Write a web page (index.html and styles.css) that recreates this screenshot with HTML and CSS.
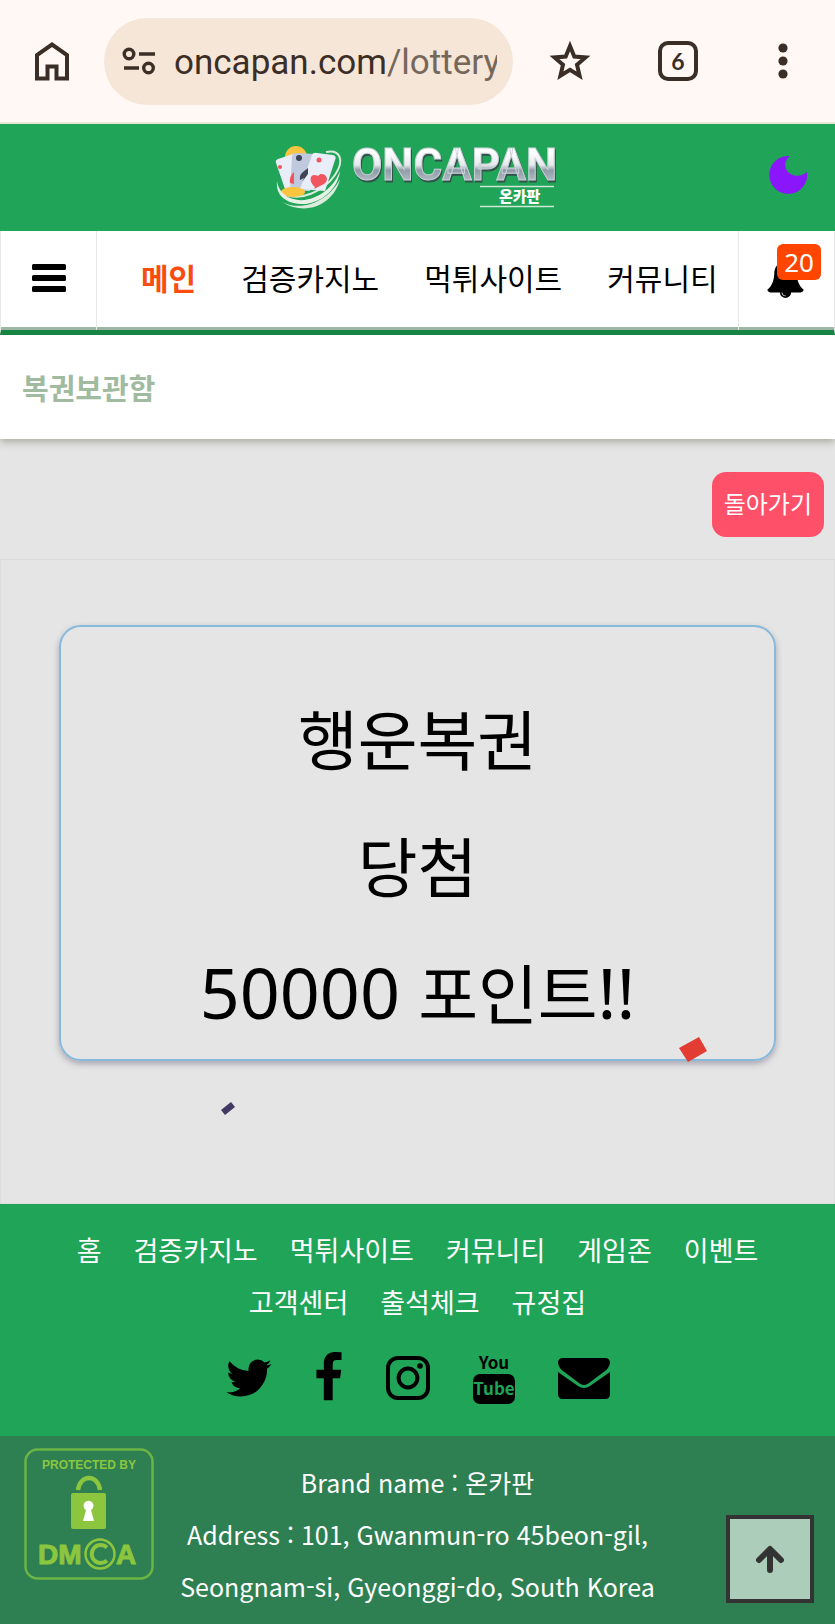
FILE: index.html
```
<!DOCTYPE html>
<html lang="ko">
<head>
    <meta charset="UTF-8">
    <meta name="viewport" content="width=device-width, initial-scale=1.0">
    <title>복권보관함 - 온카판</title>
    <link rel="stylesheet" href="styles.css">
</head>
<body>
    <div class="browser-bar">
        <button class="bar-btn" aria-label="Home">
            <svg width="36" height="40" viewBox="0 0 36 40" fill="none" stroke="currentColor" stroke-width="4">
                <path d="M3 37.500V14L18 3.500 33 14V37.500H22.500V25.500H13.500V37.500Z"/>
            </svg>
        </button>
        <div class="address">
            <svg width="34" height="28" viewBox="0 0 34 28" fill="none" stroke="currentColor" stroke-width="3.400">
                <circle cx="7" cy="7" r="4.800"/>
                <path d="M17 7H33M2 21H17"/>
                <circle cx="26.500" cy="21" r="4.800"/>
            </svg>
            <div class="url">oncapan.com<span>/lottery</span></div>
        </div>
        <button class="bar-btn" aria-label="Bookmark">
            <svg width="44" height="42" viewBox="0 0 44 42" fill="none" stroke="currentColor" stroke-width="4">
                <path d="M22 6L26.300 16.500 37.500 17.400 29 24.700 31.600 35.800 22 29.900 12.400 35.800 15 24.700 6.500 17.400 17.700 16.500Z"/>
            </svg>
        </button>
        <button class="bar-btn tabs" aria-label="Tabs">6</button>
        <button class="bar-btn" aria-label="Menu">
            <svg width="10" height="38" viewBox="0 0 10 38" fill="currentColor">
                <circle cx="5" cy="6" r="4.600"/>
                <circle cx="5" cy="19" r="4.600"/>
                <circle cx="5" cy="32" r="4.600"/>
            </svg>
        </button>
    </div>

    <header class="header">
        <a class="logo" href="#" aria-label="ONCAPAN 온카판">
            <svg width="288" height="72" viewBox="0 0 288 72">
                <defs>
                    <linearGradient id="metal" x1="0" y1="0" x2="0" y2="1">
                        <stop offset="0.250" stop-color="#ffffff"/>
                        <stop offset="0.500" stop-color="#e6e9ec"/>
                        <stop offset="0.600" stop-color="#8f9ba6"/>
                        <stop offset="0.850" stop-color="#b9c3cc"/>
                    </linearGradient>
                </defs>
                <!-- cards -->
                <g transform="translate(0 3)">
                    <circle cx="22" cy="16" r="11" fill="#f9c440"/>
                    <path d="M52 11C66 8 71 19 61 34 50 50 25 62 9 52" fill="none" stroke="#dcebdc" stroke-width="2"/>
                    <path d="M2 22Q1 19 4 18L19 13 28 47 12 51Z" fill="#e9edf7"/>
                    <path d="M18 16Q18 12 22 12L42 13 36 50 16 50Z" fill="#c0c9dd"/>
                    <path d="M38 14Q39 11 43 12L59 14Q63 15 61 19L51 50 26 48Z" fill="#e9edf7"/>
                    <path d="M41 46C33 39 37 31 44 35 48 29 58 37 50 43L40 48Z" fill="#f1555f"/>
                    <circle cx="6" cy="26" r="2" fill="#f1555f"/>
                    <circle cx="45" cy="19" r="2.500" fill="#f1555f"/>
                    <path d="M16 42Q15 35 20 31V43Z" fill="#f1555f"/>
                    <circle cx="25" cy="17" r="3" fill="#3e4358"/>
                    <path d="M34 27C29 31 25 33 26 39L30 37 28 41 34 33Z" fill="#3e4358"/>
                    <ellipse cx="19" cy="51" rx="12" ry="5" fill="#f9c440"/>
                    <path d="M3 40C5 56 24 64 41 56 53 51 62 41 66 30 64 47 50 60 32 63 16 64 1 57 3 40Z" fill="#e8f1e6"/>
                    <path d="M8 61C30 72 56 58 66 38 61 61 34 77 8 61Z" fill="#dcebdc"/>
                </g>
                <!-- wordmark -->
                <text class="wordmark" x="78" y="42">ONCAPAN</text>
                <path d="M206 48.500H280M206 68.500H280" stroke="#cfe8d6" stroke-width="1.500"/>
                <text class="wordmark-sub" x="225" y="64">온카판</text>
            </svg>
        </a>
        <button class="theme-btn" aria-label="Dark mode">
            <svg width="40" height="40" viewBox="0 0 40 40" fill="#8a17fb">
                <path d="M22 1A19 19 0 1 0 39 17C31 23 24 21 20 17 16 12 16 6 22 1Z"/>
            </svg>
        </button>
    </header>

    <nav class="nav">
        <button class="nav-side nav-menu" aria-label="메뉴">
            <svg width="34" height="28" viewBox="0 0 34 28" fill="#000">
                <rect width="34" height="6" rx="1.500"/>
                <rect y="11" width="34" height="6" rx="1.500"/>
                <rect y="22" width="34" height="6" rx="1.500"/>
            </svg>
        </button>
        <div class="nav-links">
            <a class="active" href="#">메인</a>
            <a href="#">검증카지노</a>
            <a href="#">먹튀사이트</a>
            <a href="#">커뮤니티</a>
        </div>
        <button class="nav-side nav-bell" aria-label="알림 20">
            <svg width="39" height="39" viewBox="0 0 1792 1792">
                <path d="M912 1696q0-16-16-16-59 0-101.500-42.500t-42.500-101.500q0-16-16-16t-16 16q0 73 51.500 124.500t124.500 51.500q16 0 16-16zm816-288q0 52-38 90t-90 38h-448q0 106-75 181t-181 75-181-75-75-181h-448q-52 0-90-38t-38-90q50-42 91-88t85-119.500 74.500-158.500 50-206 19.500-260q0-152 117-282.500t307-158.500q-8-19-8-39 0-40 28-68t68-28 68 28 28 68q0 20-8 39 190 28 307 158.500t117 282.500q0 139 19.500 260t50 206 74.500 158.500 85 119.500 91 88z"/>
            </svg>
            <span class="badge">20</span>
        </button>
    </nav>

    <h1 class="page-title">복권보관함</h1>

    <main>
        <div class="toolbar">
            <button class="back-btn">돌아가기</button>
        </div>
        <section class="stage">
            <div class="ticket">
                <p>행운복권</p>
                <p>당첨</p>
                <p><span class="latin">50000 </span>포인트<span class="latin">!!</span></p>
            </div>
            <!-- confetti -->
            <svg class="confetti confetti-red" width="28" height="26" viewBox="0 0 28 26">
                <path d="M0 11L20 0 28 14 9 25Z" fill="#e23c33"/>
            </svg>
            <svg class="confetti confetti-purple" width="14" height="14" viewBox="0 0 14 14">
                <path d="M0 8L10 0 14 5 4 13Z" fill="#423a63"/>
            </svg>
        </section>
    </main>

    <footer>
        <div class="footer-top">
            <div class="footer-links">
                <a href="#">홈</a>
                <a href="#">검증카지노</a>
                <a href="#">먹튀사이트</a>
                <a href="#">커뮤니티</a>
                <a href="#">게임존</a>
                <a href="#">이벤트</a>
                <a href="#">고객센터</a>
                <a href="#">출석체크</a>
                <a href="#">규정집</a>
            </div>
            <div class="social">
                <a href="#" aria-label="Twitter">
                    <svg width="46" height="52" viewBox="96 0 1600 1792">
                        <path d="M1684 408q-67 98-162 167 1 14 1 42 0 130-38 259.500t-115.500 248.500-184.500 210.500-258 146-323 54.500q-271 0-496-145 35 4 78 4 225 0 401-138-105-2-188-64.500t-114-159.500q33 5 61 5 43 0 85-11-112-23-185.500-111.500t-73.500-205.500v-4q68 38 146 41-66-44-105-115t-39-154q0-88 44-163 121 149 294.500 238.500t371.500 99.500q-8-38-8-74 0-134 94.500-228.500t228.500-94.500q140 0 236 102 109-21 205-78-37 115-142 178 93-10 186-50z"/>
                    </svg>
                </a>
                <a href="#" aria-label="Facebook">
                    <svg width="30" height="52" viewBox="400 0 1024 1792">
                        <path d="M1343 12v264h-157q-86 0-116 36t-30 108v189h293l-39 296h-254v759h-306v-759h-255v-296h255v-218q0-186 104-288.500t277-102.500q147 0 228 12z"/>
                    </svg>
                </a>
                <a href="#" aria-label="Instagram">
                    <svg width="44" height="52" viewBox="0 0 44 52">
                        <rect x="2" y="6" width="40" height="40" rx="10" fill="none" stroke="#000" stroke-width="4"/>
                        <circle cx="22" cy="26" r="9.400" fill="none" stroke="#000" stroke-width="4"/>
                        <circle cx="34" cy="14" r="2.800"/>
                    </svg>
                </a>
                <a href="#" aria-label="YouTube">
                    <svg width="44" height="56" viewBox="0 0 44 56">
                        <text class="yt-text" x="22" y="19">You</text>
                        <rect x="1" y="24" width="42" height="30" rx="7"/>
                        <text class="yt-text yt-cut" x="22" y="45">Tube</text>
                    </svg>
                </a>
                <a href="#" aria-label="Mail">
                    <svg width="52" height="52" viewBox="0 0 52 52">
                        <path d="M5 6H47Q52 6 52 11 51 16 47 19L31 31Q26 35 21 31L5 19Q1 16 0 11 0 6 5 6Z"/>
                        <path d="M0 20L20 34Q26 38 32 34L52 20V42Q52 47 47 47H5Q0 47 0 42Z"/>
                    </svg>
                </a>
            </div>
        </div>
        <div class="footer-bottom">
            <a class="dmca" href="#" aria-label="DMCA Protected">
                <svg width="130" height="132" viewBox="0 0 130 132">
                    <rect x="1.500" y="1.500" width="127" height="129" rx="12" fill="none" stroke="#6bb545" stroke-width="2.500"/>
                    <text class="dmca-small" x="65" y="21">PROTECTED BY</text>
                    <path d="M54 42C56 26 74 26 76 42" fill="none" stroke="#8cc63f" stroke-width="4.500"/>
                    <rect x="47" y="45" width="35" height="36" rx="2" fill="#8cc63f"/>
                    <path d="M62 62A5 5 0 1 1 67 62L70 73H59Z" fill="#fff"/>
                    <text class="dmca-big" x="14" y="116">DM</text>
                    <circle cx="76" cy="106" r="14.500" fill="none" stroke="#8cc63f" stroke-width="2.500"/>
                    <path d="M83 99.500A9 9 0 1 0 83 112.500" fill="none" stroke="#8cc63f" stroke-width="4"/>
                    <text class="dmca-big" x="92" y="116">A</text>
                </svg>
            </a>
            <address class="company">
                Brand name : 온카판<br>
                Address : 101, Gwanmun-ro 45beon-gil,<br>
                Seongnam-si, Gyeonggi-do, South Korea
            </address>
        </div>
    </footer>

    <button class="to-top" aria-label="Top">
        <svg width="30" height="28" viewBox="0 0 30 28" fill="none" stroke="#333" stroke-width="6" stroke-linecap="round" stroke-linejoin="round">
            <path d="M15 25V5M4 15L15 4 26 15"/>
        </svg>
    </button>
</body>
</html>
```
FILE: styles.css
```
* {
    margin: 0;
    padding: 0;
    box-sizing: border-box;
}

body {
    display: flex;
    flex-direction: column;
    min-height: 100vh;
    background: #e5e5e5;
    color: #000;
    font-family: 'Noto Sans CJK KR', 'Noto Sans', sans-serif;
}

a {
    color: inherit;
    text-decoration: none;
}

button {
    border: none;
    background: none;
    color: inherit;
    font-family: inherit;
    cursor: pointer;
}

svg {
    display: block;
}

/* Browser bar */
.browser-bar {
    display: flex;
    align-items: center;
    height: 124px;
    padding: 0 47px 0 34px;
    background: #fff8f5;
    border-bottom: 2px solid #e9e6d6;
    color: #3b2e26;
}

.bar-btn {
    flex: none;
}

.address {
    display: flex;
    align-items: center;
    flex: 1;
    gap: 18px;
    min-width: 0;
    height: 87px;
    margin: 0 35px 0 34px;
    padding: 0 16px 0 18px;
    border-radius: 44px;
    background: #f6e6d8;
}

.url {
    flex: 1;
    padding-top: 3px;
    overflow: hidden;
    white-space: nowrap;
    font-family: Roboto, sans-serif;
    font-size: 35px;
    line-height: 48px;
}

.url span {
    color: #76675b;
}

.tabs {
    width: 40px;
    height: 40px;
    margin: 0 80px 0 66px;
    border: 4px solid #3b2e26;
    border-radius: 10px;
    font-family: Lato, sans-serif;
    font-size: 23px;
    font-weight: bold;
    line-height: 32px;
}

/* Header */
.header {
    position: relative;
    display: flex;
    justify-content: center;
    height: 107px;
    padding-top: 14px;
    background: #1fa458;
}

.wordmark {
    font-family: Roboto, sans-serif;
    font-size: 44px;
    font-weight: bold;
    fill: url(#metal);
    stroke: #c9d2d8;
    stroke-width: 1;
    filter: drop-shadow(1px 2px 0 #33524a);
}

.wordmark-sub {
    font-size: 15px;
    font-weight: 900;
    fill: #fff;
}

.theme-btn {
    position: absolute;
    top: 31px;
    right: 27px;
}

/* Navigation */
.nav {
    display: flex;
    height: 104px;
    background: #fff;
    border: 1px solid #e8e8e8;
    border-width: 0 1px;
    border-bottom: 5px solid #178745;
    box-shadow: inset 0 -3px 0 #9db8a5, 0 2px 6px rgba(0, 0, 0, 0.1);
}

.nav-side {
    position: relative;
    display: flex;
    align-items: center;
    justify-content: center;
    flex: none;
    width: 96px;
    padding-bottom: 5px;
}

.nav-menu {
    border-right: 1px solid #e8e8e8;
}

.nav-bell {
    padding-right: 2px;
    border-left: 1px solid #e8e8e8;
}

.nav-links {
    display: flex;
    align-items: center;
    flex: 1;
    gap: 45px;
    padding: 0 20px 8px 44px;
    overflow: hidden;
    white-space: nowrap;
    font-size: 30px;
}

.active {
    color: #f94c0e;
    font-weight: bold;
}

.badge {
    position: absolute;
    top: 13px;
    right: 13px;
    padding: 0 7px;
    border-radius: 6px;
    background: #ff4500;
    color: #fff;
    font-family: 'Noto Sans', sans-serif;
    font-size: 26px;
    line-height: 36px;
}

.page-title {
    position: relative;
    padding: 0 22px;
    background: #fff;
    box-shadow: 0 3px 8px rgba(60, 60, 30, 0.35);
    color: #a1bba1;
    font-size: 29px;
    font-weight: bold;
    line-height: 104px;
}

/* Content */
.toolbar {
    display: flex;
    justify-content: flex-end;
    padding: 33px 11px 22px;
}

.back-btn {
    padding: 0 12px 4px;
    border-radius: 14px;
    background: #ff5069;
    color: #fff;
    font-size: 24px;
    line-height: 61px;
}

.stage {
    position: relative;
    padding: 65px 58px 142px;
    border: 1px solid #dcdcdc;
}

.ticket {
    padding: 47px 0 4px;
    border: 2px solid #86b9dc;
    border-radius: 22px;
    box-shadow: 0 3px 6px rgba(60, 50, 80, 0.35);
    font-size: 65px;
    line-height: 127px;
    text-align: center;
}

.ticket p {
    height: 127px;
}

.latin {
    font-family: 'Noto Sans', sans-serif;
    font-size: 70px;
    white-space: pre;
}

.confetti {
    position: absolute;
}

.confetti-red {
    right: 127px;
    bottom: 140px;
}

.confetti-purple {
    left: 220px;
    bottom: 87px;
}

/* Footer */
footer {
    display: flex;
    flex-direction: column;
    flex: 1;
    color: #fff;
}

.footer-top {
    padding: 20px 60px 30px;
    background: #1fa458;
}

.footer-links {
    display: flex;
    flex-wrap: wrap;
    justify-content: center;
    column-gap: 32px;
    font-size: 27px;
    line-height: 52px;
}

.social {
    display: flex;
    align-items: center;
    justify-content: center;
    gap: 42px;
    margin-top: 22px;
}

.yt-text {
    font-size: 17px;
    font-weight: bold;
    text-anchor: middle;
}

.yt-cut {
    fill: #1fa458;
}

.footer-bottom {
    display: grid;
    grid-template-columns: 130px 1fr 130px;
    flex: 1;
    padding: 12px 24px 0;
    background: #2e7f51;
}

.dmca-small,
.dmca-big {
    font-family: 'Liberation Sans', sans-serif;
    font-weight: bold;
    fill: #8cc63f;
}

.dmca-small {
    font-size: 12px;
    text-anchor: middle;
}

.dmca-big {
    font-size: 28px;
    stroke: #8cc63f;
    stroke-width: 1;
}

.company {
    padding-top: 8px;
    font-size: 25px;
    font-style: normal;
    line-height: 52px;
    text-align: center;
}

.to-top {
    position: fixed;
    right: 21px;
    bottom: 21px;
    display: flex;
    align-items: center;
    justify-content: center;
    width: 88px;
    height: 88px;
    border: 4px solid #333;
    background: #abcdb9;
}
```
